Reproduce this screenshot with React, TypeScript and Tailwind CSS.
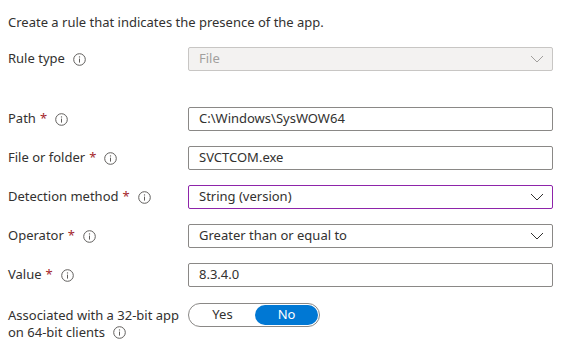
import React from "react";

const Info = () => (
  <svg width="13" height="13" viewBox="0 0 13 13" className="ml-[8px] shrink-0">
    <circle cx="6.5" cy="6.5" r="5.8" fill="none" stroke="#605e5c" strokeWidth="1" />
    <line x1="6.5" y1="5.6" x2="6.5" y2="9.6" stroke="#605e5c" strokeWidth="1" />
    <circle cx="6.5" cy="3.9" r="0.7" fill="#605e5c" />
  </svg>
);

const Chevron = ({ color }: { color: string }) => (
  <svg width="14" height="8" viewBox="0 0 14 8" className="shrink-0">
    <polyline points="1,1 7,7 13,1" fill="none" stroke={color} strokeWidth="1" />
  </svg>
);

const Label = ({ text, req }: { text: string; req?: boolean }) => (
  <div className="w-[180px] shrink-0 flex items-center text-[13px] text-[#323130]">
    <span>{text}</span>
    {req && <span className="ml-[4px] text-[#a4262c]">*</span>}
    <Info />
  </div>
);

const Row = ({ children, className = "" }: { children: React.ReactNode; className?: string }) => (
  <div className={"flex items-center h-[24px] " + className}>{children}</div>
);

export default function App() {
  return (
    <div
      className="w-[561px] h-[360px] bg-white px-[8px] pt-[13px]"
      style={{ fontFamily: '"Segoe UI", "Noto Sans", "Open Sans", sans-serif' }}
    >
      <p className="text-[13px] leading-[18px] text-[#323130]">
        Create a rule that indicates the presence of the app.
      </p>

      <Row className="mt-[16px]">
        <Label text="Rule type" />
        <div className="w-[365px] h-[24px] border border-[#c8c6c4] bg-[#f3f2f1] rounded-[2px] flex items-center justify-between pl-[10px] pr-[8px] text-[13px] text-[#a19f9d]">
          <span>File</span>
          <Chevron color="#a19f9d" />
        </div>
      </Row>

      <Row className="mt-[36px]">
        <Label text="Path" req />
        <div className="w-[365px] h-[24px] border border-[#8a8886] rounded-[2px] flex items-center pl-[10px] text-[13px] text-[#323130]">
          C:\Windows\SysWOW64
        </div>
      </Row>

      <Row className="mt-[15px]">
        <Label text="File or folder" req />
        <div className="w-[365px] h-[24px] border border-[#8a8886] rounded-[2px] flex items-center pl-[10px] text-[13px] text-[#323130]">
          SVCTCOM.exe
        </div>
      </Row>

      <Row className="mt-[15px]">
        <Label text="Detection method" req />
        <div className="w-[365px] h-[24px] border border-[#8e24aa] rounded-[2px] flex items-center justify-between pl-[10px] pr-[8px] text-[13px] text-[#323130]">
          <span>String (version)</span>
          <Chevron color="#323130" />
        </div>
      </Row>

      <Row className="mt-[15px]">
        <Label text="Operator" req />
        <div className="w-[365px] h-[24px] border border-[#8a8886] rounded-[2px] flex items-center justify-between pl-[10px] pr-[8px] text-[13px] text-[#323130]">
          <span>Greater than or equal to</span>
          <Chevron color="#323130" />
        </div>
      </Row>

      <Row className="mt-[15px]">
        <Label text="Value" req />
        <div className="w-[365px] h-[24px] border border-[#8a8886] rounded-[2px] flex items-center pl-[10px] text-[13px] text-[#323130]">
          8.3.4.0
        </div>
      </Row>

      <div className="flex items-start mt-[16px]">
        <div className="w-[180px] shrink-0 text-[13px] leading-[17px] text-[#323130] pt-[4px]">
          <div>Associated with a 32-bit app</div>
          <div className="flex items-center">
            <span>on 64-bit clients</span>
            <Info />
          </div>
        </div>
        <div className="w-[132px] h-[24px] border border-[#8a8886] rounded-full flex items-center p-[1px] text-[13px]">
          <div className="flex-1 h-full flex items-center justify-center text-[#323130]">Yes</div>
          <div className="w-[63px] h-full rounded-full bg-[#0078d4] flex items-center justify-center text-white">No</div>
        </div>
      </div>
    </div>
  );
}
